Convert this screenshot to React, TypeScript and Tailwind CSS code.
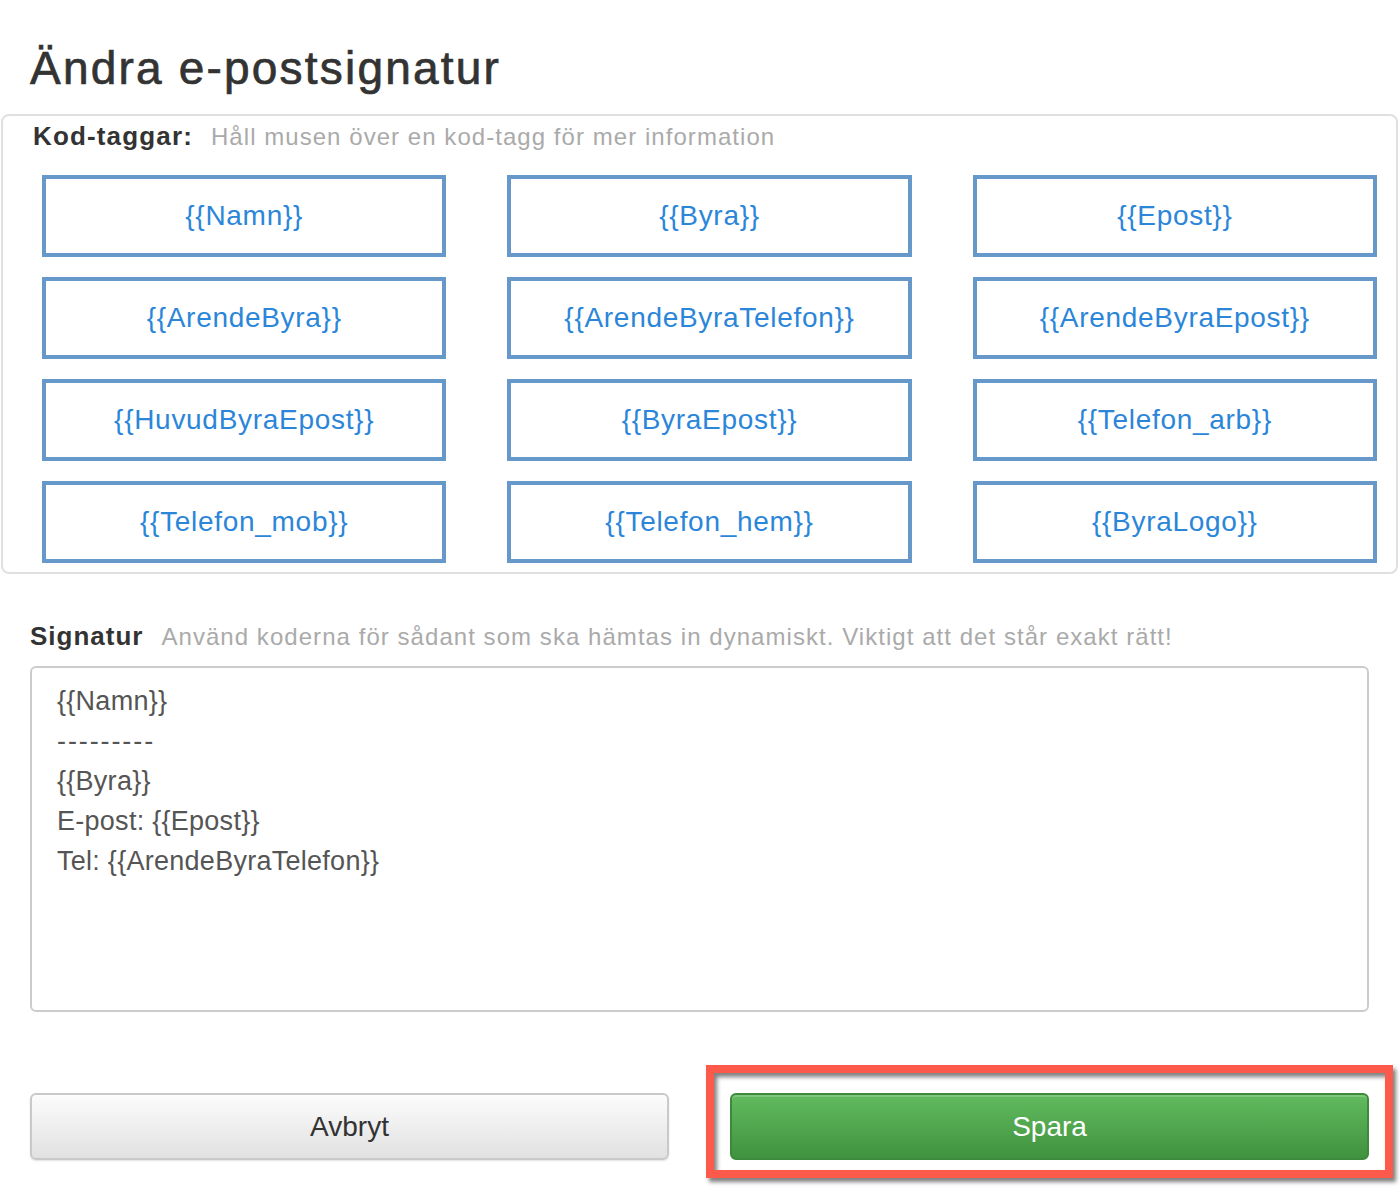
const tags = [
    "{{Namn}}", "{{Byra}}", "{{Epost}}",
    "{{ArendeByra}}", "{{ArendeByraTelefon}}", "{{ArendeByraEpost}}",
    "{{HuvudByraEpost}}", "{{ByraEpost}}", "{{Telefon_arb}}",
    "{{Telefon_mob}}", "{{Telefon_hem}}", "{{ByraLogo}}",
];

const signature = [
    "{{Namn}}",
    "---------",
    "{{Byra}}",
    "E-post: {{Epost}}",
    "Tel: {{ArendeByraTelefon}}",
];

function TagButton({ label }: { label: string }) {
    return (
        <button type="button" title={label} className="h-[82px] flex items-center justify-center border-4 border-[#6698c9] bg-white text-[#2b86d9] text-[28px] tracking-[0.7px]">
            {label}
        </button>
    )
}

export default function App() {
    return (
        <div className="w-[1400px] min-h-[1198px] bg-white font-['Liberation_Sans',Arial,sans-serif] overflow-hidden">
            <div className="px-[30px] pt-[40px] w-[1400px]">
                <h1 className="text-[46px] leading-[56px] text-[#333] tracking-[2.2px] [-webkit-text-stroke:0.7px_#333]">Ändra e-postsignatur</h1>

                <div className="-mx-[29px] mt-[18px] w-[1397px] border-2 border-[#e0e0e0] rounded-[8px] pt-[4px] pb-[9px] pl-[30px]">
                    <div className="flex items-baseline gap-[18px] h-[32px] leading-[32px]">
                        <span className="text-[26px] font-bold text-[#333] tracking-[1.15px]">Kod-taggar:</span>
                        <span className="text-[24px] text-[#aaa] tracking-[1.05px]">Håll musen över en kod-tagg för mer information</span>
                    </div>
                    <div className="ml-[9px] mt-[23px] w-[1335px] grid grid-cols-3 gap-x-[61px] gap-y-[20px]">
                        {tags.map(t => <TagButton key={t} label={t} />)}
                    </div>
                </div>

                <div className="mt-[46px] flex items-baseline gap-[18px] h-[32px] leading-[32px]">
                    <span className="text-[26px] font-bold text-[#333] tracking-[1px]">Signatur</span>
                    <span className="text-[24px] text-[#aaa] tracking-[1.05px]">Använd koderna för sådant som ska hämtas in dynamiskt. Viktigt att det står exakt rätt!</span>
                </div>

                <div className="mt-[14px] w-[1339px] h-[346px] border-2 border-[#cccccc] rounded-[6px] pt-[13px] pl-[25px] text-[27px] leading-[40px] text-[#555] tracking-[0.27px]">
                    {signature.map((line, i) => (
                        <div key={i} className={line.startsWith("-") ? "tracking-[1.9px]" : ""}>{line}</div>
                    ))}
                </div>

                <div className="mt-[81px] w-[1339px] grid grid-cols-2 gap-x-[61px]">
                    <button type="button" className="h-[67px] rounded-[6px] border-2 border-[#c9c9c9] bg-gradient-to-b from-[#fcfcfc] to-[#e1e1e1] text-[28px] text-[#333] shadow-[0_1px_2px_rgba(0,0,0,0.12)]">
                        Avbryt
                    </button>
                    <div className="relative">
                        <button type="button" className="w-full h-[67px] rounded-[6px] border-2 border-[#3d8a3c] bg-gradient-to-b from-[#62bb5f] to-[#40923f] text-[28px] text-white shadow-[inset_0_2px_0_rgba(255,255,255,0.18)]">
                            Spara
                        </button>
                        <div className="absolute -left-[24px] -right-[24px] -top-[28px] -bottom-[18px] border-[8px] border-[#fd5a4b] shadow-[3px_4px_4px_rgba(0,0,0,0.5),inset_3px_4px_4px_rgba(0,0,0,0.5)] pointer-events-none" />
                    </div>
                </div>
            </div>
        </div>
    )
}
